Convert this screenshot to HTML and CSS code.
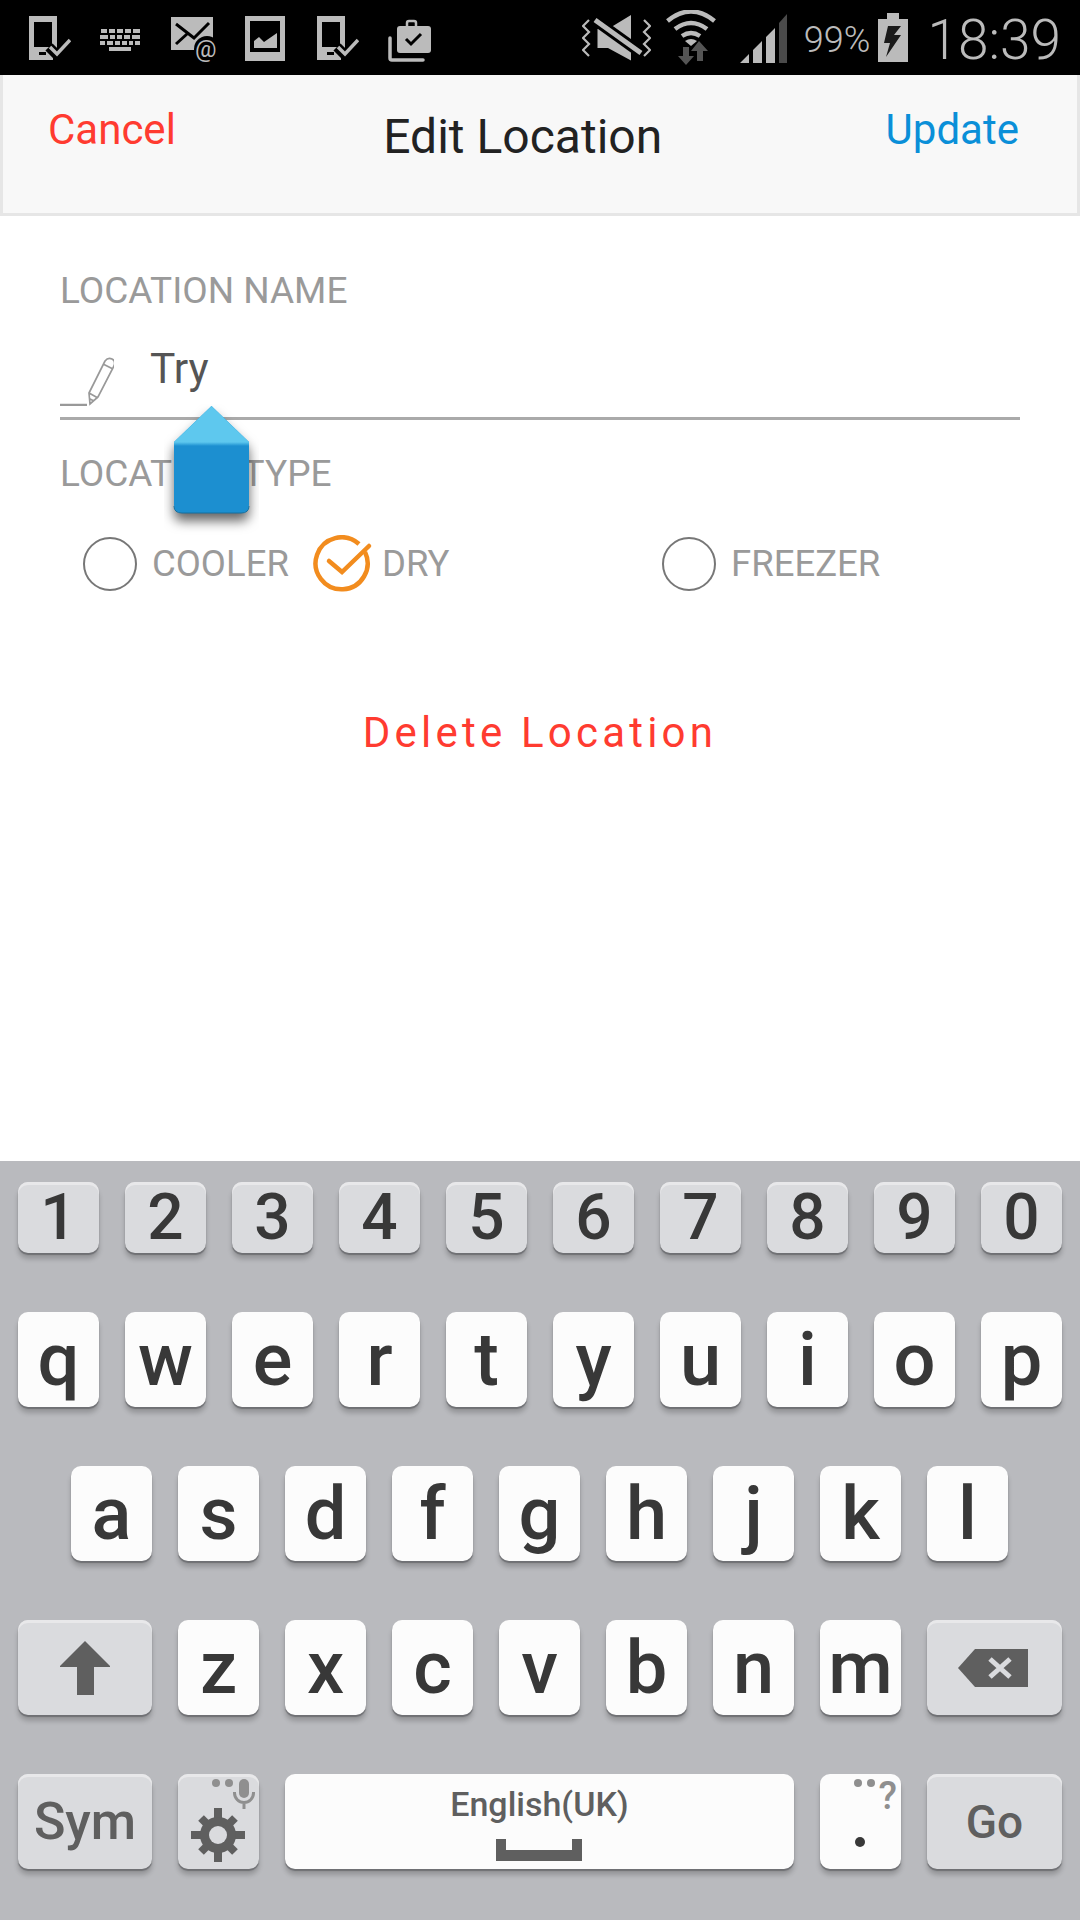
FILE: index.html
```html
<!DOCTYPE html>
<html lang="en">
<head>
<meta charset="utf-8">
<title>Edit Location</title>
<link rel="stylesheet" href="styles.css">
</head>
<body>
<div class="screen">
  <div class="status">
    <div class="status-left">
      <svg class="ic ic-t1" width="42" height="45" viewBox="0 0 42 45"><path fill="#bbb" fill-rule="evenodd" d="M0 0h28v44H0zM5 6v25h18V6z"/><rect x="10" y="36" width="7" height="3" fill="#000"/><path fill="none" stroke="#000" stroke-width="10" d="M20 31l8 8 14-15"/><path fill="none" stroke="#000" stroke-width="6" d="M24 44h8"/><path fill="none" stroke="#bbb" stroke-width="3.500" d="M21 31l7 7 13-14"/></svg>
      <svg class="ic ic-kb" width="41" height="22" viewBox="0 0 41 22"><path fill="#bbb" d="M1 0h6v4H1zM9 0h6v4H9zM17 0h6v4h-6zM25 0h6v4h-6zM33 0h7v4h-7zM0 6h8v4H0zM10 6h5v4h-5zM17 6h5v4h-5zM24 6h6v4h-6zM32 6h8v4h-8zM0 12h5v4H0zM7 12h6v4H7zM15 12h5v4h-5zM22 12h5v4h-5zM29 12h4v4h-4zM35 12h5v4h-5zM9 18h22v4H9z"/></svg>
      <svg class="ic ic-mail" width="52" height="46" viewBox="0 0 52 46"><path fill="#bbb" d="M0 0h42v33H0z"/><path fill="none" stroke="#000" stroke-width="3" d="M5 7l18 14L38 6M5 27l11-10"/><circle cx="36" cy="32" r="13" fill="#000"/><text class="at" x="24" y="40">@</text></svg>
      <svg class="ic ic-pic" width="40" height="45" viewBox="0 0 40 45"><path fill="#bbb" fill-rule="evenodd" d="M0 0h40v45H0zM5 5v31h30V5z"/><path fill="#bbb" d="M9 32V25l5-4 5 5 13-9v15z"/></svg>
      <svg class="ic ic-t2" width="42" height="45" viewBox="0 0 42 45"><path fill="#bbb" fill-rule="evenodd" d="M0 0h28v44H0zM5 6v25h18V6z"/><rect x="10" y="36" width="7" height="3" fill="#000"/><path fill="none" stroke="#000" stroke-width="10" d="M20 31l8 8 14-15"/><path fill="none" stroke="#000" stroke-width="6" d="M24 44h8"/><path fill="none" stroke="#bbb" stroke-width="3.500" d="M21 31l7 7 13-14"/></svg>
      <svg class="ic ic-brief" width="43" height="43" viewBox="0 0 43 43"><path fill="none" stroke="#bbb" stroke-width="3.500" stroke-linecap="round" d="M2 19v20q0 2 2 2h31"/><path fill="none" stroke="#bbb" stroke-width="2.500" d="M19 8V4q0-2 2-2h5q2 0 2 2v4"/><rect x="9" y="7" width="34" height="27" rx="3" fill="#bbb"/><path fill="none" stroke="#000" stroke-width="3" d="M18 20l5 5 10-10"/></svg>
    </div>
    <div class="status-right">
      <svg class="ic-vib" width="69" height="46" viewBox="0 0 69 46"><path fill="none" stroke="#bbb" stroke-width="2.200" d="M7 5L1 11l6 6-6 6 6 6-6 6 6 6M62 5l6 6-6 6 6 6-6 6 6 6-6 6"/><path fill="#bbb" d="M15.500 14H26L49 0v45.500L26 33H15.500z"/><path fill="none" stroke="#000" stroke-width="11" d="M13 5l46 33"/><path fill="none" stroke="#bbb" stroke-width="5" d="M13 5l46 33"/></svg>
      <svg class="ic-wifi" width="50" height="55" viewBox="0 0 50 55"><path fill="none" stroke="#bbb" stroke-width="4.500" d="M1.500 11Q25-8 48.500 11"/><path fill="none" stroke="#bbb" stroke-width="4.500" d="M9 19q16-12 32 0"/><path fill="none" stroke="#bbb" stroke-width="4.500" d="M16 26q9-6 18 0"/><path fill="#bbb" d="M19 31q6-4 12 0l-6 5z"/><path fill="#555" d="M17 37h6v9h5L20 55l-8-9h5z"/><path fill="#555" d="M33 31l9 10h-5v10h-6V41h-6z"/></svg>
      <svg class="ic-sig" width="47" height="49" viewBox="0 0 47 49"><path fill="#bbb" d="M0 49l9-9v9zM13 49V36l9-9v22zM26 49V23l9-9v35z"/><path fill="#4a4a4a" d="M39 49V9l8-9v49z"/></svg>
      <span class="pct">99%</span>
      <svg class="ic-bat" width="30" height="49" viewBox="0 0 30 49"><path fill="#bbb" d="M9 0h12v6h9v43H0V6h9z"/><path fill="#1a1a1a" d="M18 13h-8l-4 17h6L8 44l15-22h-7l7-9z"/></svg>
      <span class="time">18:39</span>
    </div>
  </div>

  <header class="nav">
    <span class="nav-btn cancel">Cancel</span>
    <span class="nav-title">Edit Location</span>
    <span class="nav-btn update">Update</span>
  </header>

  <main class="form">
    <div class="label label-name">LOCATION NAME</div>
    <div class="field">
      <svg class="pencil" width="54" height="50" viewBox="0 0 54 50"><path fill="none" stroke="#999" stroke-width="2.500" d="M0 49h27"/><path fill="none" stroke="#999" stroke-width="1.700" d="M30 48l-1-11L45 5q3-4 7-2t2 7L38 41zM29 37l9 5M43 8l10 5M30 43l4 2"/></svg>
      <span class="field-value">Try</span>
    </div>
    <div class="label label-type">LOCATION TYPE</div>
    <div class="options">
      <div class="opt opt-cooler"><span class="radio"></span><span class="opt-text">COOLER</span></div>
      <div class="opt opt-dry">
        <svg class="check" width="62" height="58" viewBox="0 0 62 58"><path fill="none" stroke="#f28c1e" stroke-width="4.500" d="M52 17a26 26 0 1 1-6-8"/><path fill="none" stroke="#f28c1e" stroke-width="4.500" stroke-linecap="round" d="M16 26l13 11L56 11"/></svg>
        <span class="opt-text">DRY</span>
      </div>
      <div class="opt"><span class="radio"></span><span class="opt-text">FREEZER</span></div>
    </div>
    <div class="delete">Delete Location</div>
  </main>

  <svg class="handle" width="95" height="135" viewBox="0 0 95 135">
    <defs>
      <filter id="hs" x="-30%" y="-20%" width="160%" height="150%"><feDropShadow dx="0" dy="8" stdDeviation="6" flood-color="#000" flood-opacity=".6"/></filter>
      <linearGradient id="hb" x1="0" y1="0" x2="0" y2="1"><stop offset="0" stop-color="#5ec8ee"/><stop offset="1" stop-color="#1c8fd0"/></linearGradient>
    </defs>
    <path filter="url(#hs)" fill="#1c8fd0" d="M47.500 2L85 38V101q0 8-8 8H18q-8 0-8-8V38z"/>
    <path fill="#5ec8ee" d="M47.500 2L85 38H10z"/>
    <rect x="10" y="38" width="75" height="4" fill="url(#hb)"/>
    <path fill="none" stroke="#146f9f" stroke-width="1" d="M10 102q0 7 8 7h59q8 0 8-7"/>
  </svg>

  <section class="kb">
    <div class="row row-num">
      <div class="key fn num">1</div><div class="key fn num">2</div><div class="key fn num">3</div><div class="key fn num">4</div><div class="key fn num">5</div><div class="key fn num">6</div><div class="key fn num">7</div><div class="key fn num">8</div><div class="key fn num">9</div><div class="key fn num">0</div>
    </div>
    <div class="row">
      <div class="key">q</div><div class="key">w</div><div class="key">e</div><div class="key">r</div><div class="key">t</div><div class="key">y</div><div class="key">u</div><div class="key">i</div><div class="key">o</div><div class="key">p</div>
    </div>
    <div class="row row-mid">
      <div class="key">a</div><div class="key">s</div><div class="key">d</div><div class="key">f</div><div class="key">g</div><div class="key">h</div><div class="key">j</div><div class="key">k</div><div class="key">l</div>
    </div>
    <div class="row">
      <div class="key fn wide"><svg width="52" height="56" viewBox="0 0 52 56"><path fill="#5f5f5f" d="M26 1l25 25v1H35v28H18V27H1v-1z"/></svg></div>
      <div class="key">z</div><div class="key">x</div><div class="key">c</div><div class="key">v</div><div class="key">b</div><div class="key">n</div><div class="key">m</div>
      <div class="key fn last"><svg class="del-ic" width="70" height="38" viewBox="0 0 70 38"><path fill="#5f5f5f" d="M17 0h53v38H17L0 19z"/><path fill="none" stroke="#dadbde" stroke-width="5" d="M32 10l20 18M52 10L32 28"/></svg></div>
    </div>
    <div class="row">
      <div class="key fn wide txt-fn">Sym</div>
      <div class="key fn gear">
        <span class="dots"><i></i><i></i></span>
        <svg class="mic" width="22" height="30" viewBox="0 0 22 30"><rect x="6" y="0" width="10" height="19" rx="5" fill="#8f8f8f"/><path fill="none" stroke="#8f8f8f" stroke-width="3" d="M1.500 13v1a9.500 9.500 0 0 0 19 0v-1M11 24v6"/></svg>
        <svg class="cog" width="54" height="54" viewBox="0 0 54 54"><g fill="#5f5f5f"><rect x="23" y="0" width="8" height="54"/><rect x="0" y="23" width="54" height="8"/><rect x="23" y="3" width="8" height="48" transform="rotate(45 27 27)"/><rect x="23" y="3" width="8" height="48" transform="rotate(-45 27 27)"/><circle cx="27" cy="27" r="18"/></g><circle cx="27" cy="27" r="9" fill="#dadbde"/></svg>
      </div>
      <div class="key space">
        <span class="lang">English(UK)</span>
        <svg class="space-ic" width="86" height="22" viewBox="0 0 86 22"><path fill="#5f5f5f" d="M0 0h10v11h66V0h10v22H0z"/></svg>
      </div>
      <div class="key period">
        <span class="dots"><i></i><i></i></span>
        <span class="q">?</span>
        <span class="dot"></span>
      </div>
      <div class="key fn last txt-fn go">Go</div>
    </div>
  </section>
</div>
</body>
</html>
```
FILE: styles.css
```css
* { box-sizing: border-box; }
html, body { margin: 0; padding: 0; }
body { font-family: Roboto, "Liberation Sans", sans-serif; background: #fff; }
.screen { position: relative; width: 1080px; height: 1920px; overflow: hidden; display: flex; flex-direction: column; background: #fff; }

.status { height: 75px; flex: none; background: #000; display: flex; justify-content: space-between; align-items: flex-start; }
.status-left { display: flex; padding: 16px 0 0 29px; align-items: flex-start; }
.ic { display: block; flex: none; }
.ic-t1 { margin-right: 29px; }
.ic-kb { margin: 13px 30px 0 0; }
.ic-mail { margin: 1px 22px 0 0; }
.ic-pic { margin-right: 32px; }
.ic-t2 { margin-right: 29px; }
.ic-brief { margin-top: 3px; }
.at { font-size: 24px; font-family: Roboto, sans-serif; fill: #bbb; }
.status-right { display: flex; align-items: flex-start; padding-right: 19px; }
.ic-vib { margin: 15px 15px 0 0; }
.ic-wifi { margin: 10px 24px 0 0; }
.ic-sig { margin: 14px 17px 0 0; }
.pct { font-size: 36px; font-weight: 300; color: #bbb; line-height: 36px; margin: 22px 8px 0 0; }
.ic-bat { margin: 13px 19px 0 0; }
.time { font-size: 55px; font-weight: 300; color: #bbb; line-height: 55px; margin-top: 13px; }

.nav { height: 141px; flex: none; background: #f8f8f8; border: 3px solid #e6e6e6; border-top: 0; display: flex; justify-content: space-between; align-items: flex-start; padding: 30px 58px 0 45px; }
.nav-btn { font-size: 42px; line-height: 49px; }
.cancel { color: #ff3b30; }
.update { color: #0a8fd8; }
.nav-title { font-size: 48px; line-height: 56px; color: #222; margin: 4px 16px 0 0; }

.form { flex: 1; padding: 0 60px; }
.label { font-size: 37px; line-height: 40px; color: #9a9a9a; }
.label-name { margin-top: 55px; }
.field { height: 90px; margin-top: 19px; border-bottom: 3px solid #aaa; display: flex; align-items: flex-start; }
.pencil { margin-top: 26px; flex: none; }
.field-value { font-size: 42.5px; line-height: 49px; color: #555; margin: 14px 0 0 36px; }
.label-type { margin-top: 34px; }
.options { display: flex; margin: 41px 0 0 23px; }
.opt { display: flex; align-items: center; height: 58px; }
.opt-cooler { width: 230px; }
.opt-dry { width: 349px; }
.radio { width: 54px; height: 54px; border: 2.5px solid #777; border-radius: 50%; flex: none; margin-right: 15px; }
.check { flex: none; margin-right: 7px; }
.opt-text { font-size: 36.5px; color: #9a9a9a; line-height: 40px; }
.delete { margin-top: 116px; text-align: center; font-size: 42px; line-height: 47px; letter-spacing: 4.2px; color: #ff3b30; }

.handle { position: absolute; left: 164px; top: 404px; }

.kb { height: 759px; flex: none; background: #b9babe; padding: 21px 18px 0; display: flex; flex-direction: column; }
.row { display: flex; gap: 26px; height: 95px; flex: none; margin-bottom: 59px; }
.row-num { height: 71px; }
.row-mid { padding-left: 53px; }
.key { width: 81px; flex: none; position: relative; border-radius: 10px; background: #fcfcfc; color: #383838; display: flex; align-items: center; justify-content: center; font-size: 74px; font-weight: 500; line-height: 1; box-shadow: 0 2px 1px #6f7074, 0 6px 5px rgba(0,0,0,.2); }
.fn { background: #dadbde; box-shadow: inset 0 3px 0 #e8e8ea, 0 2px 1px #6f7074, 0 6px 5px rgba(0,0,0,.2); }
.num { font-size: 64px; }
.wide { width: 134px; }
.last { flex: 1; width: auto; }
.del-ic { margin-right: 3px; }
.txt-fn { font-size: 52px; color: #5f5f5f; }
.go { font-size: 46px; }
.gear .cog { position: absolute; left: 13px; top: 34px; }
.gear .mic { position: absolute; right: 4px; top: 5px; }
.dots { position: absolute; top: 5px; left: 34px; display: flex; gap: 5px; }
.dots i { width: 8px; height: 8px; border-radius: 50%; background: #8f8f8f; display: block; }
.space { width: 509px; flex-direction: column; font-size: 34px; justify-content: flex-start; }
.lang { color: #5f5f5f; line-height: 38px; margin-top: 11px; }
.space-ic { margin: 16px 2px 0 0; }
.q { position: absolute; right: 4px; top: 0; font-size: 38px; line-height: 44px; color: #8f8f8f; }
.dot { position: absolute; left: 35px; top: 63px; width: 10px; height: 10px; border-radius: 50%; background: #383838; }
```
